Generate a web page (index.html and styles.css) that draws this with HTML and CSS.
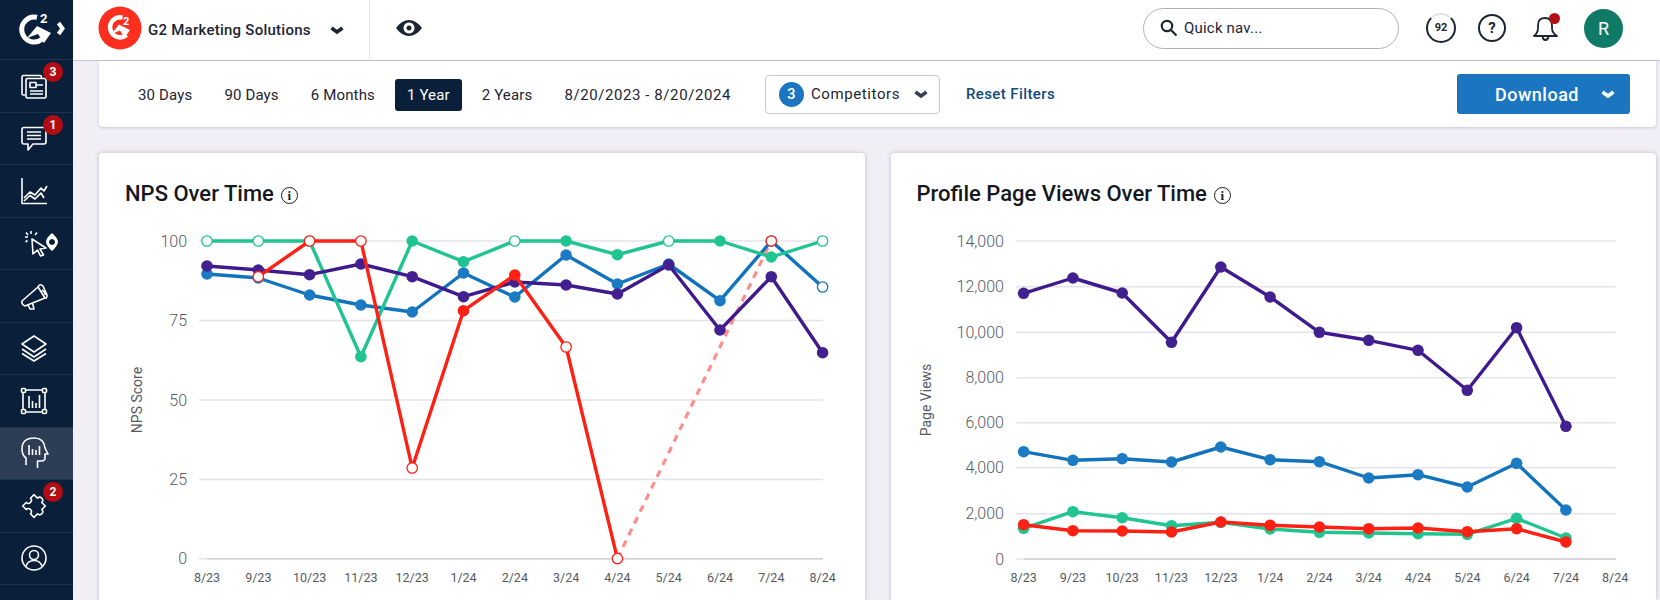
FILE: index.html
```html
<!DOCTYPE html>
<html>
<head>
	<title>NPS Over Time</title>
	<link rel="stylesheet" href="styles.css">
</head>
<body>
<div class="app">
	<nav class="sidebar">
		<div class="side-logo">
			<svg width="48" height="36" viewBox="0 0 48 36">
				<path class="logo-ring" d="M20 5.300 A12.500 12.500 0 1 0 25 27.300"/>
				<path class="logo-mark" d="M10 26 L20 14 L34 21 L27 31 L21 22 Z"/>
				<text class="logo-two" x="23" y="11">2</text>
				<path class="logo-arrow" d="M41.500 11 L45.500 16.500 L41.500 22"/>
			</svg>
		</div>
		<a class="side-item">
			<svg class="side-icon" viewBox="0 0 26 26"><path d="M4 22 H2.500 Q1 22 1 20.500 V4 Q1 2.500 2.500 2.500 H19 Q20.500 2.500 20.500 4 V5"/><rect x="5" y="5.500" width="20" height="19.500" rx="1.500"/><rect x="9" y="9.500" width="6" height="5"/><path d="M15 12 H22 M9 18 H22 M9 21 H22"/></svg>
			<span class="badge">3</span>
		</a>
		<a class="side-item">
			<svg class="side-icon" viewBox="0 0 26 26"><path d="M3 2.500 H23 Q25 2.500 25 4.500 V17 Q25 19 23 19 H12 L7 25 V19 H3 Q1 19 1 17 V4.500 Q1 2.500 3 2.500 Z"/><path d="M6 7 H20 M6 10.500 H20 M6 14 H20"/></svg>
			<span class="badge">1</span>
		</a>
		<a class="side-item">
			<svg class="side-icon" viewBox="0 0 26 26"><path d="M1 0 V25.500 H26"/><path d="M3 20 L9 14 L14 17 L20 10 L23 13 L26 8"/><path d="M3 23 L9 17.500 L14 21 L20 15 L23 20"/></svg>
		</a>
		<a class="side-item">
			<svg class="side-icon side-icon-wide" viewBox="0 0 34 26"><path d="M8 9 L22 18 L16 19 L19.500 25 L16.500 26 L13.500 20 L9 24 Z" /><path d="M7 1 V4 M1 7 H4 M13 2.500 L11 5 M2 2.500 L4 5 M1.500 12 L3.500 10.500"/><path class="solid" fill-rule="evenodd" d="M28 3 Q34.500 9 34 12 Q33.500 16 28 21 Q22.500 16 22 12 Q22 8 28 3 Z M28 9 A3 3 0 1 0 28.010 9 Z"/></svg>
		</a>
		<a class="side-item">
			<svg class="side-icon" viewBox="0 0 26 26"><path d="M1 18 L17 4 L24 15 L4 23 Q0 21 1 18 Z"/><path d="M17 4 Q19 0 22 3 L26 12 Q26 16 24 15"/><path d="M21 7 Q24 9 24.500 12"/><path d="M7 22 L9 26 H13 L11.500 20"/></svg>
		</a>
		<a class="side-item">
			<svg class="side-icon" viewBox="0 0 26 26"><path d="M13 1 L25 9 L13 17 L1 9 Z"/><path d="M1 14 L13 22 L25 14"/><path d="M1 18.500 L13 26 L25 18.500"/></svg>
		</a>
		<a class="side-item">
			<svg class="side-icon" viewBox="0 0 26 26"><path d="M4 2 H22 M4 24 H22 M2 4 V22 M24 4 V22"/><rect x="0.500" y="0.500" width="4" height="4" rx="1"/><rect x="21.500" y="0.500" width="4" height="4" rx="1"/><rect x="0.500" y="21.500" width="4" height="4" rx="1"/><rect x="21.500" y="21.500" width="4" height="4" rx="1"/><path d="M8 8 V20 M11.500 13 V20 M15 15 V20 M18.500 7 V20"/></svg>
		</a>
		<a class="side-item side-item-active">
			<svg class="side-icon" viewBox="0 0 26 32"><path d="M5 28 V21 Q1 18 1 12 Q1 1 13 1 Q23 1 24 11 L27 17 H24 V21 Q24 24 20 24 H16.500 V31"/><path d="M8 8 V18 M11.500 12 V18 M15 13 V18 M18.500 9 V18"/></svg>
		</a>
		<a class="side-item">
			<svg class="side-icon" viewBox="0 0 26 26"><path transform="rotate(45 13 13)" d="M5 5 H10 a3 3 0 1 1 6 0 H21 V10 a3 3 0 1 1 0 6 V21 H16 a3 3 0 1 0 -6 0 H5 V16 a3 3 0 1 0 0 -6 Z"/></svg>
			<span class="badge">2</span>
		</a>
		<a class="side-item">
			<svg class="side-icon" viewBox="0 0 26 26"><circle cx="13" cy="13" r="12"/><circle cx="13" cy="10" r="4.500"/><path d="M5 21 Q7 15.500 13 15.500 Q19 15.500 21 21"/></svg>
		</a>
	</nav>
	<div class="main">
		<header class="topbar">
			<div class="brand">
				<svg class="brand-logo" width="44" height="44" viewBox="0 0 44 44">
					<circle class="brand-disc" cx="22" cy="22" r="21.500"/>
					<path class="logo-ring logo-ring-small" d="M24.500 11.600 A10 10 0 1 0 28.500 29"/>
					<path class="logo-mark" d="M13.500 28 L21 18.500 L32 24 L26.500 32 L22 24.500 Z"/>
					<text class="logo-two logo-two-small" x="25" y="18.500">2</text>
				</svg>
				<span class="brand-name">G2 Marketing Solutions</span>
				<svg class="chevron chevron-dark" viewBox="0 0 14 9"><path d="M1.500 2 L7 6 L12.500 2"/></svg>
			</div>
			<div class="eye">
				<svg width="26" height="16" viewBox="0 0 26 16"><path class="eye-shape" fill-rule="evenodd" d="M0 8 Q6 0 13 0 Q20 0 26 8 Q20 16 13 16 Q6 16 0 8 Z M13 2.500 A5.500 5.500 0 1 0 13.010 2.500 Z M13 5.500 A2.500 2.500 0 1 1 12.990 5.500 Z"/></svg>
			</div>
			<div class="search">
				<svg width="18" height="18" viewBox="0 0 18 18"><circle class="glass" cx="7" cy="7" r="5.200"/><path class="glass" d="M11 11 L16.500 16.500"/></svg>
				<span class="search-text">Quick nav...</span>
			</div>
			<div class="top-icons">
				<div class="score">92</div>
				<div class="help">?</div>
				<div class="bell">
					<svg width="28" height="30" viewBox="0 0 28 30"><path class="bell-line" d="M2 23 Q6 20 6 15 V12 Q6 5 13 5 Q20 5 20 12 V15 Q20 20 25 23 Z"/><path class="bell-line" d="M10.500 23.500 Q11 27 13.500 27 Q16 27 16.500 23.500"/></svg>
					<span class="bell-dot"></span>
				</div>
				<div class="avatar">R</div>
			</div>
		</header>
		<div class="content">
			<section class="filters">
				<a class="range">30 Days</a>
				<a class="range">90 Days</a>
				<a class="range">6 Months</a>
				<a class="range range-on">1 Year</a>
				<a class="range">2 Years</a>
				<a class="range range-dates">8/20/2023 - 8/20/2024</a>
				<div class="competitors">
					<span class="count">3</span>
					<span>Competitors</span>
					<svg class="chevron chevron-grey" viewBox="0 0 14 9"><path d="M1.500 2 L7 6 L12.500 2"/></svg>
				</div>
				<a class="reset">Reset Filters</a>
				<button class="download">
					<span>Download</span>
					<svg class="chevron chevron-white" viewBox="0 0 14 9"><path d="M1.500 2 L7 6 L12.500 2"/></svg>
				</button>
			</section>
			<div class="cards">
				<section class="card">
					<h2 class="card-title">NPS Over Time <span class="info">i</span></h2>
					<svg id="nps" class="chart" width="765" height="392"></svg>
				</section>
				<section class="card">
					<h2 class="card-title">Profile Page Views Over Time <span class="info">i</span></h2>
					<svg id="views" class="chart" width="766" height="392"></svg>
				</section>
			</div>
		</div>
	</div>
</div>
<script src="charts.js"></script>
</body>
</html>
```

FILE: styles.css
```css
html, body {
	margin: 0;
	height: 600px;
	overflow: hidden;
}
body {
	font-family: "Roboto", "Liberation Sans", sans-serif;
	color: #1d2433;
	background: #f1eef5;
}
.app {
	display: flex;
	height: 600px;
}

/* left nav */
.sidebar {
	width: 73px;
	flex: none;
	background: #0a1f3a;
	display: flex;
	flex-direction: column;
}
.side-logo {
	height: 60px;
	flex: none;
	display: flex;
	align-items: center;
	padding-left: 17px;
	box-sizing: border-box;
	border-bottom: 1px solid #1d324c;
}
.side-item {
	position: relative;
	height: 52.5px;
	flex: none;
	box-sizing: border-box;
	border-bottom: 1px solid #1d324c;
	display: flex;
	align-items: center;
	padding-left: 21px;
}
.side-item-active {
	background: #2c3d55;
}
.side-icon {
	width: 26px;
	height: 26px;
	fill: none;
	stroke: #fff;
	stroke-width: 1.600;
	stroke-linejoin: round;
	overflow: visible;
}
.side-icon-wide {
	width: 34px;
	margin-left: 3px;
}
.side-icon .solid {
	fill: #fff;
	stroke: none;
}
.side-item-active .side-icon {
	height: 32px;
}
.badge {
	position: absolute;
	left: 43px;
	top: 2px;
	width: 20px;
	height: 20px;
	border-radius: 50%;
	background: #b30c12;
	color: #fff;
	font-size: 12px;
	font-weight: 700;
	line-height: 20px;
	text-align: center;
}
.logo-ring {
	fill: none;
	stroke: #fff;
	stroke-width: 5;
}
.logo-ring-small {
	stroke-width: 4.500;
}
.logo-mark {
	fill: #fff;
}
.logo-two {
	fill: #fff;
	font-family: "Roboto", sans-serif;
	font-size: 13px;
	font-weight: 700;
}
.logo-two-small {
	font-size: 11px;
}
.logo-arrow {
	fill: none;
	stroke: #fff;
	stroke-width: 4;
}
.chevron {
	width: 14px;
	height: 9px;
	fill: none;
	stroke-width: 3.500;
}
.chevron-dark { stroke: #1d2433; }
.chevron-grey { stroke: #3a4250; }
.chevron-white { stroke: #fff; }

/* top bar */
.main {
	flex: 1;
	min-width: 0;
	display: flex;
	flex-direction: column;
}
.topbar {
	height: 61px;
	flex: none;
	box-sizing: border-box;
	background: #fff;
	border-bottom: 1px solid #c4c4c8;
	display: flex;
	align-items: center;
}
.brand {
	width: 297px;
	height: 60px;
	box-sizing: border-box;
	padding-left: 25px;
	border-right: 1px solid #e2e2e4;
	display: flex;
	align-items: center;
}
.brand-logo {
	margin-top: -4px;
}
.brand-disc {
	fill: #ff2f1f;
}
.brand-name {
	margin-left: 6px;
	font-size: 15px;
	font-weight: 500;
	letter-spacing: .25px;
}
.brand .chevron {
	margin-left: 19px;
}
.eye {
	width: 78px;
	display: flex;
	justify-content: center;
	margin-top: -4px;
}
.eye-shape {
	fill: #1d2433;
}
.search {
	width: 256px;
	height: 41px;
	box-sizing: border-box;
	margin-left: 695px;
	margin-top: -4px;
	padding-left: 16px;
	border: 1px solid #b0b2b8;
	border-radius: 21px;
	display: flex;
	align-items: center;
	gap: 6px;
}
.glass {
	fill: none;
	stroke: #1d2433;
	stroke-width: 2.200;
}
.search-text {
	font-size: 15px;
	letter-spacing: .2px;
}
.top-icons {
	margin-left: 27px;
	margin-top: -4px;
	display: flex;
	align-items: center;
}
.score {
	width: 26px;
	height: 26px;
	border: 2px solid #1d2433;
	border-top-color: #dfe4ea;
	border-right-color: #1d2433;
	border-radius: 50%;
	font-size: 11px;
	font-weight: 700;
	line-height: 26px;
	text-align: center;
}
.help {
	width: 24px;
	height: 24px;
	margin-left: 22px;
	border: 2px solid #1d2433;
	border-radius: 50%;
	font-size: 15px;
	font-weight: 700;
	line-height: 24px;
	text-align: center;
}
.bell {
	position: relative;
	width: 28px;
	height: 30px;
	margin-left: 26px;
}
.bell-line {
	fill: none;
	stroke: #1d2433;
	stroke-width: 1.800;
	stroke-linejoin: round;
}
.bell-dot {
	position: absolute;
	left: 17px;
	top: 0;
	width: 11px;
	height: 11px;
	border-radius: 50%;
	background: #b30c12;
}
.avatar {
	width: 39px;
	height: 39px;
	margin-left: 24px;
	border-radius: 50%;
	background: #0f7a66;
	color: #fff;
	font-size: 18px;
	line-height: 39px;
	text-align: center;
}

/* filters */
.content {
	padding: 0 4px 0 26px;
	display: flex;
	flex-direction: column;
	gap: 26px;
}
.filters {
	height: 66px;
	box-sizing: border-box;
	padding: 0 26px 0 23px;
	background: #fff;
	border-radius: 0 0 4px 4px;
	box-shadow: 0 1px 3px rgba(30, 30, 60, .18);
	display: flex;
	align-items: center;
}
.range {
	padding: 0 16px;
	height: 32px;
	line-height: 32px;
	font-size: 15px;
	letter-spacing: .15px;
	border-radius: 3px;
	margin-top: 1px;
}
.range-on {
	background: #0a1f3a;
	color: #fff;
	padding: 0 12px;
	margin-left: 4px;
	margin-right: 4px;
}
.range-dates {
	letter-spacing: .58px;
}
.competitors {
	width: 175px;
	height: 39px;
	box-sizing: border-box;
	margin-left: 18px;
	padding: 0 11px 0 13px;
	border: 1px solid #c8c9d0;
	border-radius: 4px;
	font-size: 15px;
	letter-spacing: .6px;
	display: flex;
	align-items: center;
	gap: 7px;
}
.competitors .chevron {
	margin-left: auto;
}
.count {
	width: 25px;
	height: 25px;
	flex: none;
	border-radius: 50%;
	background: #1b75c0;
	color: #fff;
	font-size: 15px;
	font-weight: 500;
	line-height: 25px;
	text-align: center;
}
.reset {
	margin-left: 26px;
	font-size: 15px;
	font-weight: 500;
	letter-spacing: .4px;
	color: #0f4a80;
}
.download {
	width: 173px;
	height: 40px;
	margin-left: auto;
	border: 0;
	border-radius: 3px;
	background: #1b75c0;
	color: #fff;
	font-family: inherit;
	font-size: 18px;
	font-weight: 500;
	letter-spacing: .5px;
	display: flex;
	align-items: center;
	padding: 0 15px 0 38px;
}
.download .chevron {
	margin-left: auto;
}

/* chart cards */
.cards {
	display: flex;
	gap: 26px;
}
.card {
	flex: 1;
	min-width: 0;
	height: 447px;
	background: #fff;
	border-radius: 4px 4px 0 0;
	box-shadow: 0 0 4px rgba(30, 30, 60, .25);
}
.card-title {
	margin: 0 0 0 26px;
	padding-top: 27px;
	height: 28px;
	font-size: 22px;
	line-height: 28px;
	font-weight: 500;
	color: #14181f;
	display: flex;
	align-items: center;
	gap: 7px;
}
.info {
	width: 15px;
	height: 15px;
	margin-top: 3px;
	border: 1.500px solid #14181f;
	border-radius: 50%;
	font-family: "Liberation Serif", serif;
	font-size: 13px;
	font-weight: 700;
	line-height: 15px;
	text-align: center;
}
.chart {
	display: block;
}
.grid {
	stroke: #e3e3ea;
	stroke-width: 1.500;
}
.baseline {
	stroke: #d2d2d6;
	stroke-width: 1.500;
}
.axis-y {
	fill: #555a63;
	font-size: 16px;
	font-weight: 300;
	text-anchor: end;
}
.axis-x {
	fill: #555a63;
	font-size: 12.500px;
	text-anchor: middle;
}
.axis-title {
	fill: #555a63;
	font-size: 14px;
	text-anchor: middle;
}
.line {
	fill: none;
	stroke-width: 3.400;
	stroke-linejoin: round;
}
.dash {
	fill: none;
	stroke: #ff8f8a;
	stroke-width: 3.200;
	stroke-dasharray: 7 6;
}
.c-blue { stroke: #1273bd; fill: #1b7ac4; }
.c-green { stroke: #1fc490; fill: #1fc490; }
.c-purple { stroke: #3f1a8c; fill: #43208f; }
.c-red { stroke: #ff2014; fill: #ff2014; }
.line.c-blue, .line.c-green, .line.c-purple, .line.c-red { fill: none; }
.hollow { fill: #fff; stroke-width: 1.300; }
.solid-dot { stroke: none; }
```

FILE: charts.js
```js
var NS = "http://www.w3.org/2000/svg";

function el(svg, name, attrs, text) {
	var e = document.createElementNS(NS, name);
	for (var k in attrs) e.setAttribute(k, attrs[k]);
	if (text) e.textContent = text;
	svg.appendChild(e);
	return e;
}

var months = ["8/23","9/23","10/23","11/23","12/23","1/24","2/24","3/24","4/24","5/24","6/24","7/24","8/24"];

// o.y values are page pixels, chartTop is where the svg starts under the card title
var chartTop = 208;

function drawChart(id, o) {
	var svg = document.getElementById(id);
	var i;
	o.ticks.forEach(function(t) {
		var y = t[1]-chartTop;
		el(svg, "line", {"class":"grid", x1:o.gridL, x2:o.gridR, y1:y, y2:y});
		el(svg, "text", {"class":"axis-y", x:o.labelX, y:y+5.5}, t[0]);
	});
	var base = o.ticks[o.ticks.length-1][1]-chartTop;
	el(svg, "line", {"class":"baseline", x1:o.x0, x2:o.gridR, y1:base, y2:base});
	months.forEach(function(m, i) {
		el(svg, "text", {"class":"axis-x", x:o.x0+i*o.dx, y:582-chartTop}, m);
	});
	el(svg, "text", {"class":"axis-title", x:0, y:0,
		transform:"translate("+o.titleX+" "+(400-chartTop)+") rotate(-90)"}, o.title);

	if (o.dash) {
		el(svg, "path", {"class":"dash", d:"M"+o.dash[0]+" "+(o.dash[1]-chartTop)+" L"+o.dash[2]+" "+(o.dash[3]-chartTop)});
	}
	o.series.forEach(function(s) {
		var pts = [];
		for (i=0; i<s.y.length; i++) {
			if (s.y[i] === null) continue;
			pts.push([o.x0+i*o.dx, s.y[i]-chartTop, i]);
		}
		var upto = s.lineTo === undefined ? pts.length : s.lineTo;
		el(svg, "polyline", {"class":"line c-"+s.c,
			points:pts.slice(0,upto).map(function(p){return p[0]+","+p[1];}).join(" ")});
		pts.forEach(function(p) {
			var open = s.open && s.open.indexOf(p[2]) >= 0;
			el(svg, "circle", {"class":(open?"hollow ":"solid-dot ")+"c-"+s.c, cx:p[0], cy:p[1], r:open?5.2:5.8});
		});
	});
}

drawChart("nps", {
	title:"NPS Score", titleX:43,
	x0:108, dx:51.3, gridL:100, gridR:724, labelX:88,
	ticks:[["100",241],["75",320.5],["50",400],["25",479.5],["0",558.7]],
	dash:[108+8*51.3, 558.6, 108+11*51.3, 241],
	series:[
		{c:"blue", y:[274,278,295,305,312,273,297,255,284,264,300.7,241,287], open:[12]},
		{c:"green", y:[241,241,241,356.7,241,261.7,241,241,254.7,241,241,257,241], open:[0,1,2,6,9,12]},
		{c:"purple", y:[266,270,274.7,264,276.7,296.7,282,285,294,265,330,276.7,352.7]},
		{c:"red", y:[null,276.7,241,241,468,310.7,275,347,558.6,null,null,241], open:[1,2,3,4,7,8,11], lineTo:8}
	]
});

drawChart("views", {
	title:"Page Views", titleX:40,
	x0:132.6, dx:49.3, gridL:125, gridR:724.5, labelX:113,
	ticks:[["14,000",241],["12,000",286.7],["10,000",332.3],["8,000",377.7],
		["6,000",422.7],["4,000",467.7],["2,000",513.7],["0",559]],
	series:[
		{c:"blue", y:[451.7,460.3,458.7,462,447,459.7,461.7,478,474.7,487,463.3,510]},
		{c:"green", y:[528.3,511.7,517.7,525.7,522.3,529,532.3,533,533.7,534.3,518.3,538]},
		{c:"purple", y:[293.3,278,293,342.3,267,297,332.3,340.3,350.3,390.3,327.7,426.3]},
		{c:"red", y:[524.7,530.7,531,532,522,525.3,527,528.7,528,531.7,528.7,542]}
	]
});
```
